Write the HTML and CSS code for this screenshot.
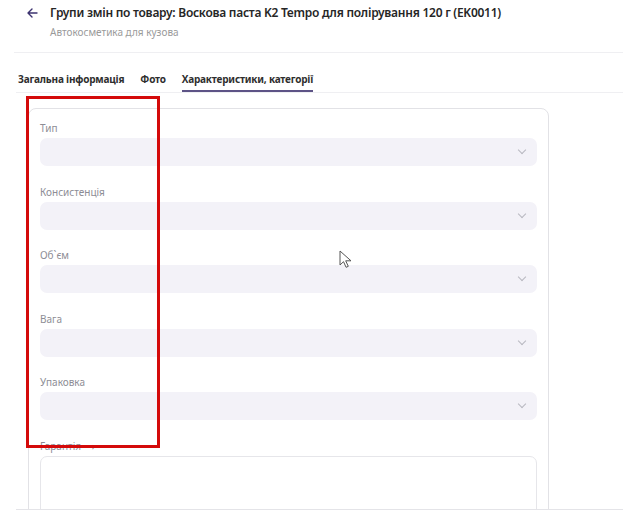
FILE: index.html
```html
<!DOCTYPE html>
<html lang="uk">
<head>
    <meta charset="UTF-8">
    <title>Групи змін по товару</title>
    <link rel="stylesheet" href="styles.css">
</head>
<body>

    <!-- Page header -->
    <div class="page-header">
        <div class="title-row">
            <span class="back-btn">
                <svg width="11" height="10" viewBox="0 0 11 10"><path d="M10 5H1.5M5 1L1 5l4 4" fill="none" stroke="#3d3370" stroke-width="1.4" stroke-linecap="round" stroke-linejoin="round"/></svg>
            </span>
            <h1 class="page-title">Групи змін по товару: Воскова паста K2 Tempo для полірування 120 г (EK0011)</h1>
        </div>
        <p class="page-subtitle">Автокосметика для кузова</p>
    </div>

    <!-- Tabs -->
    <div class="tabs">
        <span class="tab">Загальна інформація</span>
        <span class="tab">Фото</span>
        <span class="tab active">Характеристики, категорії</span>
    </div>

    <!-- Characteristics form -->
    <div class="content">
        <div class="card">
            <div class="field">
                <label class="field-label">Тип</label>
                <div class="select-box"><span class="chevron"></span></div>
            </div>
            <div class="field">
                <label class="field-label">Консистенція</label>
                <div class="select-box"><span class="chevron"></span></div>
            </div>
            <div class="field">
                <label class="field-label">Об`єм</label>
                <div class="select-box"><span class="chevron"></span></div>
            </div>
            <div class="field">
                <label class="field-label">Вага</label>
                <div class="select-box"><span class="chevron"></span></div>
            </div>
            <div class="field">
                <label class="field-label">Упаковка</label>
                <div class="select-box"><span class="chevron"></span></div>
            </div>
            <div class="field">
                <label class="field-label">Гарантія <span class="label-arrow">›</span></label>
                <div class="text-box"></div>
            </div>
        </div>
    </div>

    <!-- Annotation overlay -->
    <div class="highlight"></div>
    <svg class="cursor" width="14" height="19" viewBox="0 0 14 19"><path d="M1 1v14l3.5-3.3 2.6 5.6 2.2-1-2.6-5.5H12z" fill="#fff" stroke="#555" stroke-width="1" stroke-linejoin="round"/></svg>

</body>
</html>
```

FILE: styles.css
```css
/* General Reset */
* {
    margin: 0;
    padding: 0;
    box-sizing: border-box;
    font-family: 'Noto Sans', 'Open Sans', sans-serif;
}

body {
    width: 623px;
    height: 512px;
    background: #fff;
    color: #2b2b2b;
    overflow: hidden;
    position: relative;
}

/* Header */
.page-header {
    margin-left: 14px;
    padding: 4px 0 13px 13px;
    border-bottom: 1px solid #efeff2;
}

.title-row {
    display: flex;
    align-items: center;
    height: 17px;
}

.back-btn {
    display: flex;
    width: 23px;
}

.page-title {
    font-size: 12px;
    font-weight: 600;
    letter-spacing: -0.25px;
    color: #262626;
    white-space: nowrap;
}

.page-subtitle {
    margin: 4px 0 0 23px;
    font-size: 10px;
    color: #9a9a9a;
    line-height: 14px;
}

/* Tabs */
.tabs {
    display: flex;
    gap: 16px;
    margin: 19px 0 0 16px;
    padding-left: 2px;
    border-bottom: 1px solid #efeff2;
}

.tab {
    font-size: 10px;
    font-weight: 700;
    letter-spacing: -0.2px;
    color: #2e2e2e;
    line-height: 14px;
    padding-bottom: 4px;
    border-bottom: 2px solid transparent;
}

.tab.active {
    border-bottom-color: #5d5386;
}

/* Content */
.content {
    margin-left: 16px;
    height: 417px;
    padding: 15px 0 0 12px;
    border-bottom: 1px solid #e4e4e8;
    overflow: hidden;
}

.card {
    width: 521px;
    height: 420px;
    border: 1px solid #e2e2e6;
    border-radius: 8px;
    padding: 12px 11px 0 11px;
    display: flex;
    flex-direction: column;
    gap: 18.5px;
}

.field {
    display: flex;
    flex-direction: column;
    gap: 3px;
}

.field-label {
    font-size: 10px;
    line-height: 14px;
    color: #8d8d95;
}

.label-arrow {
    margin-left: 8px;
}

.select-box {
    height: 28px;
    background: #f3f2f8;
    border-radius: 7px;
    position: relative;
}

.chevron {
    position: absolute;
    right: 12px;
    top: 9px;
    width: 6px;
    height: 6px;
    border-right: 1px solid #b8b8c0;
    border-bottom: 1px solid #b8b8c0;
    transform: rotate(45deg);
}

.text-box {
    height: 80px;
    border: 1px solid #e6e6ea;
    border-radius: 7px;
}

/* Annotation */
.highlight {
    position: absolute;
    left: 26px;
    top: 96px;
    width: 134px;
    height: 352px;
    border: 3px solid #d40a0a;
}

.cursor {
    position: absolute;
    left: 339px;
    top: 250px;
}
```
